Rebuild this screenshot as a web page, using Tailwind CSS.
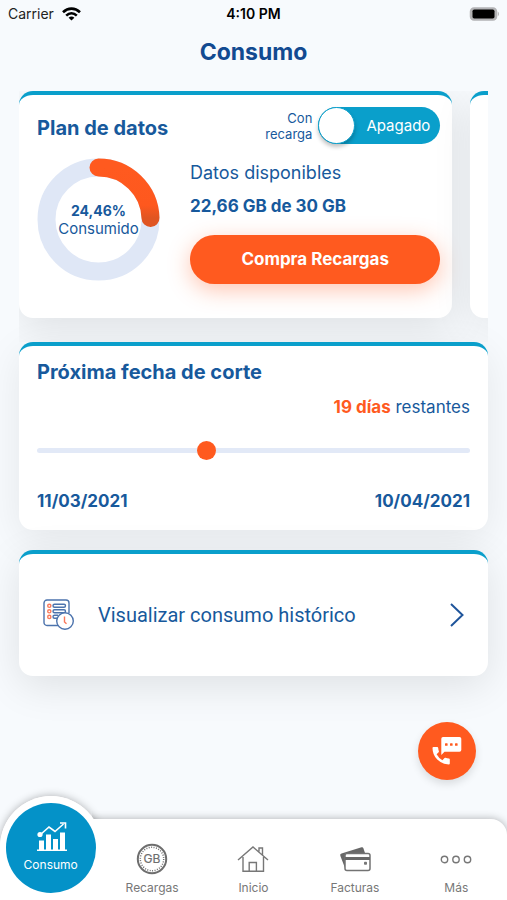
<!DOCTYPE html>
<html lang="es">
<head>
<meta charset="utf-8">
<meta name="viewport" content="width=device-width, initial-scale=1">
<title>Consumo</title>
<script src="https://cdn.jsdelivr.net/npm/@tailwindcss/browser@4"></script>
</head>
<body class="bg-[#f7fafd] font-['Inter','Liberation_Sans',sans-serif] text-[#17599c]">
<div class="relative flex min-h-screen flex-col overflow-hidden">

  <!-- Status bar -->
  <div class="grid h-7 grid-cols-3 items-center px-2 text-sm text-black">
    <div class="flex items-center gap-2 text-[#222]">
      <span>Carrier</span>
      <svg class="h-3.5 w-[19px]" viewBox="0 0 19 14" fill="none" stroke="#000" stroke-width="2.6" aria-hidden="true">
        <path d="M1 5.2C6 .4 13 .4 18 5.2"/><path d="M4.2 8.6c3.2-3 7.400-3 10.600 0"/><path d="M9.500 13.600 6.600 10.700c1.700-1.500 4.100-1.500 5.800 0z" fill="#000" stroke="none"/>
      </svg>
    </div>
    <div class="text-center font-semibold">4:10 PM</div>
    <svg class="h-4 w-[30px] justify-self-end" viewBox="0 0 30 16" aria-hidden="true">
      <rect x="1.500" y="2" width="26" height="12" rx="3.500" fill="#b3b3b5" stroke="#b3b3b5" stroke-width="1.500"/>
      <rect x="3.500" y="3.500" width="22" height="9" rx="1.800" fill="#000"/>
      <path d="M28.800 5.800c1.500.6 1.500 3.800 0 4.400z" fill="#b3b3b5"/>
    </svg>
  </div>

  <h1 class="mt-2 text-center text-[23px] leading-8 font-bold text-[#124a91]">Consumo</h1>

  <main class="flex flex-col px-[19px] pt-[23px]">

    <!-- Plan carousel -->
    <div class="flex gap-[18px] overflow-hidden pb-6">
      <section class="w-[92.4%] shrink-0 rounded-[14px] border-t-4 border-[#0a9fcb] bg-white pt-3 pr-3 pb-[34px] pl-[18px] shadow-[0_10px_40px_rgba(0,0,0,0.1)]">
        <div class="flex items-center justify-between">
          <h2 class="pt-1 text-[20px] leading-6 font-bold">Plan de datos</h2>
          <div class="flex items-center gap-1.5">
            <label for="recarga" class="w-14 text-right text-[13px] leading-4">Con recarga</label>
            <div class="relative flex">
              <input id="recarga" type="checkbox" role="switch" class="h-[37px] w-[122px] appearance-none rounded-full bg-[#0a9fcb]">
              <span class="pointer-events-none absolute top-0 left-0 size-[37px] rounded-full border border-[#0a9fcb] bg-white shadow-[0_3px_4px_rgba(0,0,0,0.25)]"></span>
              <span class="pointer-events-none absolute inset-y-0 right-2.5 text-[15px] leading-[37px] text-white">Apagado</span>
            </div>
          </div>
        </div>
        <div class="mt-3.5 flex gap-[30px]">
          <div class="relative size-[123px] shrink-0">
            <svg class="size-full" viewBox="0 0 123 123" fill="none" stroke-width="18" aria-hidden="true">
              <defs><linearGradient id="arc" x1="0" y1="0" x2="0" y2="1"><stop offset="0" stop-color="#ff5a1f"/><stop offset=".75" stop-color="#fe581e"/><stop offset="1" stop-color="#e05522"/></linearGradient></defs>
              <circle cx="61.500" cy="61.500" r="52" stroke="#dfe7f6"/>
              <path d="M61.500 9.500A52 52 0 0 1 113.500 60" stroke="url(#arc)" stroke-linecap="round"/>
            </svg>
            <p class="absolute inset-0 flex flex-col items-center justify-center text-[15px] leading-[18px]"><strong class="text-sm leading-[18px] font-bold">24,46%</strong><span>Consumido</span></p>
          </div>
          <div class="flex grow flex-col">
            <p class="mt-[3px] text-[18px] leading-6">Datos disponibles</p>
            <p class="mt-[9px] text-[17px] leading-6 font-bold">22,66 GB de 30 GB</p>
            <button type="button" class="mt-[17px] h-[49px] w-full rounded-full bg-[#ff5a1f] text-[17px] font-bold text-white shadow-[0_6px_22px_rgba(255,90,31,0.35)]">Compra Recargas</button>
          </div>
        </div>
      </section>
      <section class="w-[92.4%] shrink-0 rounded-[14px] border-t-4 border-[#0a9fcb] bg-white shadow-[0_10px_40px_rgba(0,0,0,0.08)]"></section>
    </div>

    <!-- Billing cut-off date -->
    <section class="rounded-[14px] border-t-4 border-[#0a9fcb] bg-white px-[18px] pt-3 pb-[17px] shadow-[0_10px_40px_rgba(0,0,0,0.08)]">
      <h2 class="text-[20px] leading-7 font-bold"><label for="corte">Próxima fecha de corte</label></h2>
      <p class="mt-[9px] text-right text-[17px] leading-6"><strong class="font-bold text-[#ff5a1f]">19 días</strong> restantes</p>
      <input id="corte" type="range" min="0" max="31" value="12" class="mt-[21px] block h-5 w-full appearance-none bg-transparent [&::-webkit-slider-runnable-track]:h-[5px] [&::-webkit-slider-runnable-track]:rounded-sm [&::-webkit-slider-runnable-track]:bg-[#e2e9f7] [&::-webkit-slider-thumb]:-mt-[7px] [&::-webkit-slider-thumb]:size-[19px] [&::-webkit-slider-thumb]:appearance-none [&::-webkit-slider-thumb]:rounded-full [&::-webkit-slider-thumb]:bg-[#ff5a1f]">
      <div class="mt-[29px] flex justify-between text-[17px] leading-6 font-bold"><span>11/03/2021</span><span>10/04/2021</span></div>
    </section>

    <!-- History link -->
    <a href="#historico" class="mt-5 flex h-[126px] items-center rounded-[14px] border-t-4 border-[#0a9fcb] bg-white pr-6 pl-6 shadow-[0_10px_40px_rgba(0,0,0,0.1)]">
      <svg class="size-8" viewBox="0 0 32 32" fill="none" stroke="#4c73ad" stroke-width="1.400" aria-hidden="true">
        <path d="M15 26.500H4A3 3 0 0 1 1 23.500V4A3 3 0 0 1 4 1H23A3 3 0 0 1 26 4V14"/>
        <rect x="10" y="5.300" width="12.500" height="3" rx="1.500"/><rect x="10" y="10.800" width="12.500" height="3" rx="1.500"/><path d="M14 19.300H11.500a1.500 1.500 0 0 1 0-3H15"/>
        <g stroke="#f9785a"><circle cx="6.300" cy="6.800" r="1.600"/><circle cx="6.300" cy="12.300" r="1.600"/><circle cx="6.300" cy="17.900" r="1.600"/></g>
        <circle cx="22" cy="22" r="8.300" fill="#fff"/>
        <path d="M21.500 17.500V23l2 1.800" stroke="#f9785a"/>
      </svg>
      <span class="ml-[23px] grow font-['Roboto',sans-serif] text-[20px]">Visualizar consumo histórico</span>
      <svg class="h-6 w-3.5" viewBox="0 0 14 24" fill="none" stroke="#1f559b" stroke-width="2" aria-hidden="true"><path d="M1 1 12.500 12 1 23"/></svg>
    </a>
  </main>

  <button type="button" aria-label="Contacto" class="absolute right-[31px] bottom-[120px] flex size-[58px] items-center justify-center rounded-full bg-[#ff5a1f] shadow-[0_4px_8px_rgba(0,0,0,0.12)]">
    <svg class="h-[30px] w-[30px]" viewBox="0 0 30 30" fill="#fff" aria-hidden="true">
      <path d="M11 1H27.500a1.800 1.800 0 0 1 1.800 1.800V14a1.800 1.800 0 0 1-1.800 1.800H12.500L9.300 19V2.800A1.800 1.800 0 0 1 11 1z"/>
      <path d="M1.500 11H5.200a1 1 0 0 1 1 .9c.1 1.200.3 2.300.7 3.300a1 1 0 0 1-.3 1L4.600 18.300a14.500 14.500 0 0 0 5.800 5.900l2.100-2.100a1 1 0 0 1 1-.3c1.100.4 2.200.6 3.400.7a1 1 0 0 1 .9 1V27.500a1 1 0 0 1-1 1A16.500 16.500 0 0 1 .5 12a1 1 0 0 1 1-1z"/>
      <g fill="#ff5a1f"><rect x="13" y="7.200" width="2.600" height="2.600" rx=".6"/><rect x="18" y="7.200" width="2.600" height="2.600" rx=".6"/><rect x="23" y="7.200" width="2.600" height="2.600" rx=".6"/></g>
    </svg>
  </button>

  <!-- Tab bar -->
  <nav class="relative mt-auto h-[81px]">
    <span class="absolute top-[-23px] left-[calc(10%-51px)] size-[102px] rounded-full bg-white shadow-[0_0_8px_rgba(0,0,0,0.3)]"></span>
    <span class="absolute inset-0 rounded-tr-2xl bg-white shadow-[0_0_8px_rgba(0,0,0,0.3)] [clip-path:inset(-12px_0_0_92px)]"></span>
    <span class="absolute inset-x-0 top-7 bottom-0 bg-white"></span>
    <span class="absolute top-[-23px] left-[calc(10%-51px)] size-[102px] rounded-full bg-white"></span>
    <div class="relative grid h-full grid-cols-5 text-xs leading-4 text-[#777]">
      <a href="#consumo" aria-current="page" class="-mt-4 flex size-[90px] flex-col items-center justify-self-center rounded-full bg-[#0492c8] pt-[18px] text-white">
        <svg class="h-8 w-8" viewBox="0 0 32 32" fill="#fff" aria-hidden="true">
          <path d="M4 19.500h5V29H4zM11 13.500h5V29h-5zM18 18h5v11h-5zM25 11.500h5V29h-5zM2 28.500h30V30H2z"/>
          <path d="M5 14 14 6l6 4.500L28.500 3" fill="none" stroke="#fff" stroke-width="1.600"/><circle cx="5" cy="13.500" r="2.600"/><path d="M25 2h5.500v5.500"  fill="none" stroke="#fff" stroke-width="1.600"/>
        </svg>
        <span class="mt-1">Consumo</span>
      </a>
      <a href="#recargas" class="flex flex-col items-center pt-6">
        <svg class="size-8" viewBox="0 0 32 32" fill="none" stroke="#6e6e6e" aria-hidden="true">
          <circle cx="16" cy="16" r="14.200" stroke-width="2"/><circle cx="16" cy="16" r="11.700" stroke-width="1.500" stroke-dasharray="1 1.450"/>
          <text x="16" y="20.300" text-anchor="middle" font-size="12" fill="#6e6e6e" stroke-width=".2">GB</text>
        </svg>
        <span class="mt-[5px]">Recargas</span>
      </a>
      <a href="#inicio" class="flex flex-col items-center pt-6">
        <svg class="size-8" viewBox="0 0 32 32" fill="none" stroke="#777" stroke-width="1.400" aria-hidden="true">
          <path d="M1 17 16 4l15 13M6 14v14.300h20.500V14M12.200 28v-8.500h7.200V28M22 8.500V5h3.500v7"/>
        </svg>
        <span class="mt-[5px]">Inicio</span>
      </a>
      <a href="#facturas" class="flex flex-col items-center pt-6">
        <svg class="size-8" viewBox="0 0 32 32" aria-hidden="true">
          <path d="M2.500 10.500 22.500 4.300a1.500 1.500 0 0 1 1.900 1L26 10H9a3 3 0 0 0-3 3v12L1.300 12.700a1.700 1.700 0 0 1 1.200-2.200z" fill="#686868"/>
          <rect x="6" y="10.500" width="25" height="17" rx="2" fill="#fff" stroke="#737373" stroke-width="1.500"/>
          <path d="M6 14h25v3H6z" fill="#686868"/><rect x="25" y="18.800" width="3" height="3" rx=".8" fill="#777"/>
        </svg>
        <span class="mt-[5px]">Facturas</span>
      </a>
      <a href="#mas" class="flex flex-col items-center pt-6">
        <svg class="size-8" viewBox="0 0 32 32" fill="none" stroke="#777" stroke-width="1.400" aria-hidden="true"><circle cx="4.500" cy="16.500" r="3.200"/><circle cx="16" cy="16.500" r="3.200"/><circle cx="27.500" cy="16.500" r="3.200"/></svg>
        <span class="mt-[5px]">Más</span>
      </a>
    </div>
  </nav>
</div>
</body>
</html>
